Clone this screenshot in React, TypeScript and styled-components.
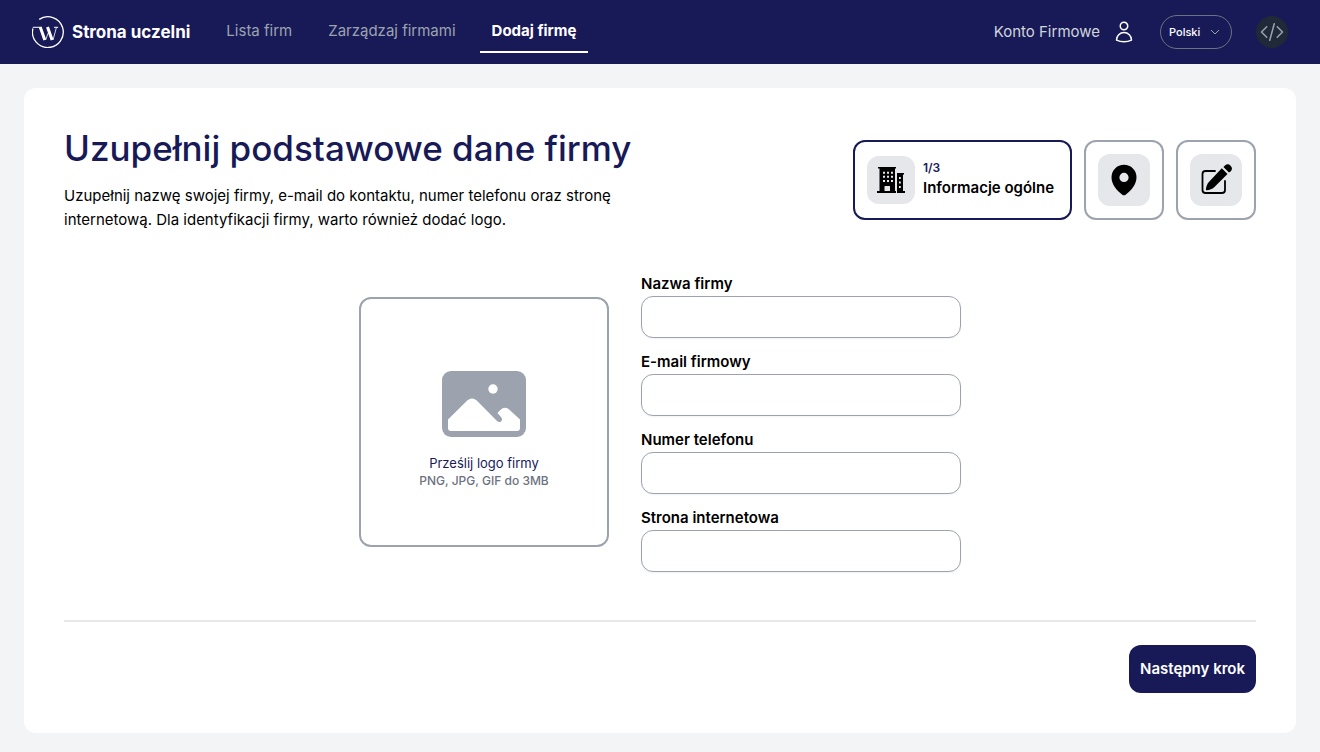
import React from "react";
import styled, { createGlobalStyle, css } from "styled-components";

const navy = "#181a57";
const gray = "#9ca3af";

const GlobalStyle = createGlobalStyle`
  *, *::before, *::after { box-sizing: border-box; }
  body {
    margin: 0;
    background: #f3f4f6;
    color: #000;
    font: 400 15px/24px Inter, "Liberation Sans", sans-serif;
  }
  h1, p { margin: 0; }
  button, input, select { font: inherit; color: inherit; }
  a { color: inherit; text-decoration: none; }
`;

const Bar = styled.header`
  display: flex;
  align-items: center;
  justify-content: space-between;
  height: 64px;
  padding: 0 32px;
  background: ${navy};
  color: #fff;
`;
const BarGroup = styled.div`
  display: flex;
  align-items: center;
  gap: 24px;
`;
const Brand = styled.a`
  display: flex;
  align-items: center;
  gap: 8px;
  font-size: 17px;
  font-weight: 700;
`;
const Nav = styled.nav`
  display: flex;
  gap: 12px;
`;
const NavLink = styled.a<{ $active?: boolean }>`
  padding: 8px 12px;
  border-bottom: 2px solid transparent;
  color: ${gray};
  ${(p) =>
    p.$active &&
    css`
      border-color: #fff;
      color: #fff;
      font-weight: 700;
    `}
`;
const Account = styled.a`
  display: flex;
  align-items: center;
  gap: 12px;
  color: #d1d5db;
  svg { color: #fff; }
`;
const LanguageBox = styled.div`
  display: grid;
  align-items: center;
  width: 72px;
  height: 34px;
  select, svg { grid-area: 1 / 1; }
  svg { justify-self: end; margin-right: 12px; color: ${gray}; pointer-events: none; }
`;
const LanguageSelect = styled.select`
  width: 100%;
  height: 100%;
  padding: 0 8px;
  border: 1px solid #6b7280;
  border-radius: 17px;
  appearance: none;
  background: transparent;
  font-size: 11px;
  font-weight: 500;
`;
const CodeButton = styled.button`
  display: grid;
  place-items: center;
  width: 32px;
  height: 32px;
  padding: 0;
  border: 0;
  border-radius: 50%;
  background: #1f2937;
  color: ${gray};
`;

const Card = styled.main`
  margin: 24px;
  padding: 40px;
  border-radius: 12px;
  background: #fff;
`;
const CardHeader = styled.div`
  display: flex;
  align-items: center;
  justify-content: space-between;
  gap: 24px;
`;
const Intro = styled.div`
  max-width: 576px;
`;
const Title = styled.h1`
  margin-bottom: 16px;
  color: ${navy};
  font-size: 35px;
  font-weight: 500;
  line-height: 40px;
  white-space: nowrap;
`;
const Lead = styled.p`
  max-width: 560px;
`;
const Steps = styled.div`
  display: flex;
  flex-shrink: 0;
  gap: 12px;
`;
const Step = styled.button<{ $active?: boolean }>`
  display: flex;
  align-items: center;
  gap: 8px;
  min-width: ${(p) => (p.$active ? 219 : 80)}px;
  height: 80px;
  padding: 12px;
  border: 2px solid ${(p) => (p.$active ? navy : gray)};
  border-radius: 12px;
  background: #fff;
  font-weight: 600;
  line-height: 24px;
  text-align: left;
`;
const StepIcon = styled.span<{ $size: number }>`
  display: grid;
  place-items: center;
  width: ${(p) => p.$size}px;
  height: ${(p) => p.$size}px;
  border-radius: 12px;
  background: #e5e7eb;
`;
const StepText = styled.span`
  display: flex;
  flex-direction: column;
`;
const StepCount = styled.span`
  color: ${navy};
  font-size: 12px;
  line-height: 16px;
`;

const Form = styled.form`
  margin-top: 40px;
`;
const FormBody = styled.div`
  display: flex;
  align-items: center;
  justify-content: center;
  gap: 32px;
`;
const Upload = styled.button`
  display: flex;
  flex-direction: column;
  align-items: center;
  justify-content: center;
  width: 250px;
  height: 250px;
  padding: 28px 12px 12px;
  border: 2px solid ${gray};
  border-radius: 12px;
  background: #fff;
  svg { margin-bottom: 16px; color: ${gray}; }
`;
const UploadTitle = styled.span`
  color: ${navy};
  font-size: 13px;
  line-height: 20px;
`;
const UploadHint = styled.span`
  color: #6b7280;
  font-size: 12px;
  font-weight: 500;
  line-height: 16px;
`;
const Fields = styled.div`
  display: flex;
  flex-direction: column;
  gap: 12px;
  width: 320px;
`;
const Field = styled.label`
  display: block;
  font-weight: 600;
`;
const TextInput = styled.input`
  display: block;
  width: 100%;
  height: 42px;
  padding: 8px 12px;
  border: 1px solid ${gray};
  border-radius: 12px;
  background: #fff;
  box-shadow: 0 1px 2px rgba(0, 0, 0, 0.05);
  font-weight: 400;
`;
const Footer = styled.div`
  display: flex;
  justify-content: flex-end;
  margin-top: 48px;
  padding-top: 23px;
  border-top: 2px solid #e5e7eb;
`;
const NextButton = styled.button`
  height: 48px;
  padding: 0 11px;
  border: 0;
  border-radius: 12px;
  background: ${navy};
  color: #fff;
  font-weight: 600;
`;

const LogoIcon = () => (
  <svg width="32" height="32" viewBox="0 0 32 32" fill="none" stroke="currentColor" aria-hidden="true">
    <path d="M7.2 3.4A15.4 15.4 0 1 1 .9 12.5" strokeWidth="1.3" />
    <path d="M0.800 11.300h8M22 11.300h4.200" strokeWidth="1" />
    <path d="M8.200 11 12.800 24M15.500 11l4.600 13" strokeWidth="3" />
    <path d="m13.600 24 2.600-7M21 24l3.400-12.500" strokeWidth="0.800" />
  </svg>
);
const UserIcon = () => (
  <svg width="24" height="24" viewBox="0 0 24 24" fill="none" stroke="currentColor" strokeWidth="1.5" strokeLinecap="round" strokeLinejoin="round" aria-hidden="true">
    <path d="M15.75 6a3.75 3.75 0 1 1-7.5 0 3.75 3.75 0 0 1 7.5 0ZM4.5 20.12a7.5 7.5 0 0 1 15 0A17.9 17.9 0 0 1 12 21.75c-2.68 0-5.22-.58-7.5-1.63Z" />
  </svg>
);
const ChevronIcon = () => (
  <svg width="10" height="10" viewBox="0 0 10 10" fill="none" stroke="currentColor" aria-hidden="true">
    <path d="m1 3 4 4 4-4" />
  </svg>
);
const CodeIcon = () => (
  <svg width="24" height="24" viewBox="0 0 24 24" fill="none" stroke="currentColor" strokeWidth="1.5" strokeLinecap="round" strokeLinejoin="round" aria-hidden="true">
    <path d="M17.25 6.75 22.5 12l-5.25 5.25m-10.5 0L1.500 12l5.25-5.25m7.5-3-4.5 16.5" />
  </svg>
);
const BuildingIcon = () => (
  <svg width="28" height="28" viewBox="0 0 28 28" aria-hidden="true">
    <path fill="currentColor" fillRule="evenodd" d="M1 1h18v1.500h-1V25h1v2H0v-2h2.500V2.500H1ZM6 5.800v2h2v-2Zm4 0v2h2v-2Zm4 0v2h2v-2ZM6 9.800v2h2v-2Zm4 0v2h2v-2Zm4 0v2h2v-2ZM6 14v2h2v-2Zm4 0v2h2v-2Zm4 0v2h2v-2ZM8 20q-.5 0-.5.5V25H13v-4.500q0-.5-.5-.5ZM20 7h7v1.500h-1V25h2v2h-8ZM22 11v2h1.800v-2Zm0 4.500v2h1.800v-2Zm0 4.500v2h1.800v-2Z" />
  </svg>
);
const PinIcon = () => (
  <svg width="26" height="32" viewBox="0 0 26 32" aria-hidden="true">
    <path fill="currentColor" fillRule="evenodd" d="M13 .8C6 .8.500 6.300.500 13.300c0 7.200 5.500 13.500 11.200 17.600.8.600 1.800.6 2.600 0C20 26.800 25.500 20.500 25.500 13.300 25.500 6.300 20 .8 13 .8ZM13 18a4.600 4.600 0 1 0 0-9.200A4.600 4.600 0 0 0 13 18Z" />
  </svg>
);
const EditIcon = () => (
  <svg width="32" height="32" viewBox="0 0 32 32" aria-hidden="true">
    <path d="M15 7H5.500a3 3 0 0 0-3 3v16a3 3 0 0 0 3 3H22a3 3 0 0 0 3-3v-9" fill="none" stroke="currentColor" strokeWidth="1.800" strokeLinecap="round" />
    <path fill="currentColor" d="m21.800 4.200 5.700 5.700-13.300 13.300c-2 1.800-4.600 2.800-7.400 3.100-.6.1-1-.4-.9-1 .3-2.800 1.300-5.500 3.200-7.500ZM23.400 3 25 1.400a4.200 4.200 0 0 1 5.900 5.900L29 8.600Z" />
  </svg>
);
const ImageIcon = () => (
  <svg width="84" height="66" viewBox="0 0 84 66" aria-hidden="true">
    <rect width="84" height="66" rx="9" fill="currentColor" />
    <circle cx="51" cy="18" r="4.700" fill="#fff" />
    <path fill="#fff" d="M6 48.500 25.500 29.200q4.500-3.200 9 0L55 50q2.200 1.800 4 .500 2-1.800.3-4L55.500 42l2.800-3q4.700-4.300 9.400 0L78 48.500V57q0 3-3 3H9q-3 0-3-3Z" />
  </svg>
);

const fields = [
  { id: "name", label: "Nazwa firmy", type: "text" },
  { id: "email", label: "E-mail firmowy", type: "email" },
  { id: "phone", label: "Numer telefonu", type: "tel" },
  { id: "website", label: "Strona internetowa", type: "url" },
];

export default function App() {
  return (
    <>
      <GlobalStyle />
      <Bar>
        <BarGroup>
          <Brand href="#">
            <LogoIcon />
            Strona uczelni
          </Brand>
          <Nav>
            <NavLink href="#">Lista firm</NavLink>
            <NavLink href="#">Zarządzaj firmami</NavLink>
            <NavLink href="#" $active aria-current="page">Dodaj firmę</NavLink>
          </Nav>
        </BarGroup>
        <BarGroup>
          <Account href="#">
            Konto Firmowe
            <UserIcon />
          </Account>
          <LanguageBox>
            <LanguageSelect aria-label="Język" defaultValue="pl">
              <option value="pl">Polski</option>
            </LanguageSelect>
            <ChevronIcon />
          </LanguageBox>
          <CodeButton type="button" aria-label="Kod źródłowy">
            <CodeIcon />
          </CodeButton>
        </BarGroup>
      </Bar>
      <Card>
        <CardHeader>
          <Intro>
            <Title>Uzupełnij podstawowe dane firmy</Title>
            <Lead>
              Uzupełnij nazwę swojej firmy, e-mail do kontaktu, numer telefonu oraz stronę
              internetową. Dla identyfikacji firmy, warto również dodać logo.
            </Lead>
          </Intro>
          <Steps>
            <Step type="button" $active aria-current="step">
              <StepIcon $size={48}><BuildingIcon /></StepIcon>
              <StepText>
                <StepCount>1/3</StepCount>
                Informacje ogólne
              </StepText>
            </Step>
            <Step type="button" aria-label="Lokalizacja">
              <StepIcon $size={52}><PinIcon /></StepIcon>
            </Step>
            <Step type="button" aria-label="Opis">
              <StepIcon $size={52}><EditIcon /></StepIcon>
            </Step>
          </Steps>
        </CardHeader>
        <Form onSubmit={(e) => e.preventDefault()}>
          <FormBody>
            <Upload type="button">
              <ImageIcon />
              <UploadTitle>Prześlij logo firmy</UploadTitle>
              <UploadHint>PNG, JPG, GIF do 3MB</UploadHint>
            </Upload>
            <Fields>
              {fields.map((f) => (
                <Field key={f.id} htmlFor={f.id}>
                  {f.label}
                  <TextInput id={f.id} name={f.id} type={f.type} />
                </Field>
              ))}
            </Fields>
          </FormBody>
          <Footer>
            <NextButton type="submit">Następny krok</NextButton>
          </Footer>
        </Form>
      </Card>
    </>
  );
}
